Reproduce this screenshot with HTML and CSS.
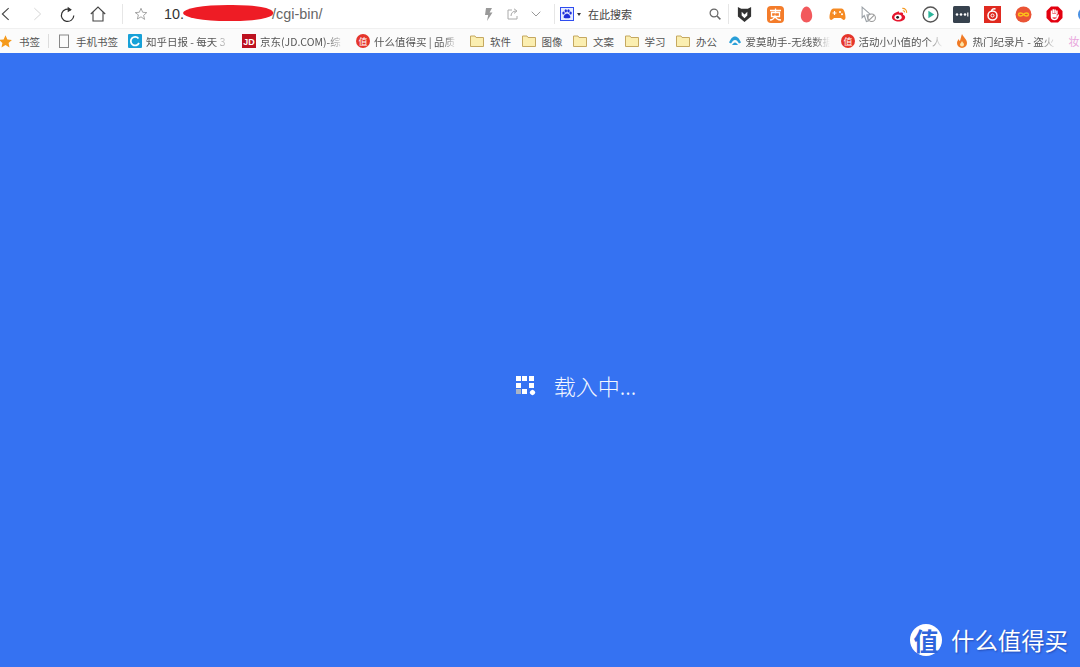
FILE: index.html
```html
<!DOCTYPE html>
<html lang="zh-CN">
<head>
<meta charset="utf-8">
<title>载入中</title>
<link rel="stylesheet" href="styles.css">
</head>
<body>
<div class="browser">
  <header class="toolbar">
    <div class="nav">
      <svg class="nb back" viewBox="0 0 10 16"><path d="M8.5 1.5 1.5 8l7 6.5" fill="none" stroke="#444" stroke-width="1.200"/></svg>
      <svg class="nb fwd" viewBox="0 0 10 16"><path d="M1.5 1.5 8.5 8l-7 6.5" fill="none" stroke="#d4d4d4" stroke-width="1.100"/></svg>
      <svg class="nb reload" viewBox="0 0 16 18"><path d="M11.600 4.200A6.600 6.600 0 1 0 14.700 10" fill="none" stroke="#333" stroke-width="1.300"/><path d="M8.200.6l4.400 3.400-4.400 2.600z" fill="#333"/></svg>
      <svg class="nb home" viewBox="0 0 16 16"><path d="M.8 8 8 1l7.200 7M3 6.200V15h10V6.200" fill="none" stroke="#444" stroke-width="1.100"/></svg>
      <i class="sep s1"></i>
      <svg class="nb fav" viewBox="0 0 16 16"><path d="m8 1.500 1.900 4.500 4.700.4-3.600 3.100 1.100 4.700L8 11.200l-4.100 2.500L5 9 1.400 6.400l4.700-.4z" fill="none" stroke="#999" stroke-width="1"/></svg>
    </div>
    <div class="url"><span>10.</span><b class="blot"></b><span class="path">/cgi-bin/</span></div>
    <div class="urlacts">
      <svg class="a1" viewBox="0 0 9 13"><path d="M2 0h6L5.600 4.500H8.500L3 13l1.200-6H1z" fill="#999"/></svg>
      <svg class="a2" viewBox="0 0 12 12"><path d="M5 2H1v9h9V8M4 8c0-3 2-5 5-5M7 .8 10 3 7 5.400" fill="none" stroke="#aaa" stroke-width="1"/></svg>
      <svg class="a3" viewBox="0 0 10 6"><path d="m.7.7 4.300 4.300L9.300.7" fill="none" stroke="#999" stroke-width="1"/></svg>
    </div>
    <i class="sep"></i>
    <div class="search">
      <svg class="paw" viewBox="0 0 14 14"><rect x=".5" y=".5" width="13" height="13" fill="#e6ecff" stroke="#2f4df0"/><g fill="#1f2fd8"><ellipse cx="3.500" cy="6" rx="1.200" ry="1.600"/><ellipse cx="5.800" cy="3.800" rx="1.200" ry="1.600"/><ellipse cx="8.500" cy="3.800" rx="1.200" ry="1.600"/><ellipse cx="10.600" cy="6" rx="1.200" ry="1.600"/><path d="M7 6.500c1.600 0 3.400 2.300 3.400 3.600 0 1.300-1.500 1.200-3.400 1.200s-3.400.1-3.400-1.200C3.600 8.800 5.400 6.500 7 6.500z"/></g></svg>
      <i class="caret"></i>
      <span class="stext">在此搜索</span>
      <svg class="glass" viewBox="0 0 12 12"><circle cx="5" cy="5" r="3.900" fill="none" stroke="#666" stroke-width="1.200"/><path d="m8 8 3.400 3.400" stroke="#666" stroke-width="1.500"/></svg>
    </div>
    <i class="sep"></i>
    <div class="exts">
      <svg viewBox="0 0 16 18"><path d="M1 1l3.500 2h7L15 1v10l-7 6-7-6z" fill="#333"/><path d="M5 6l3 3 3-3v4l-3 3-3-3z" fill="#fff"/></svg>
      <svg viewBox="0 0 17 17"><rect width="17" height="17" rx="4" fill="#f47c2a"/><path d="M3 4.500h11M8.500 2.500v5M4.500 6.500h8v4h-8zM3 14c3 0 4-1 5-4 1 3 3 4 6 4" fill="none" stroke="#fff" stroke-width="1.300"/></svg>
      <svg viewBox="0 0 13 17"><path d="M6.500.5c3 0 5.700 5 5.700 9.300 0 4-2.700 6.700-5.700 6.700S.8 13.800.8 9.800C.8 5.500 3.500.5 6.500.5z" fill="#f2595c"/></svg>
      <svg viewBox="0 0 17 13"><path d="M4.500.5h8c2.500 0 4 5 4 9 0 3-2.500 3.200-4.500.6H5C3 12.700.5 12.500.5 9.500c0-4 1.500-9 4-9z" fill="#f58a23"/><path d="M3.500 5h4M5.500 3v4" stroke="#fff" stroke-width="1.200"/><circle cx="11" cy="4" r="1" fill="#fff"/><circle cx="13" cy="6.300" r="1" fill="#fff"/></svg>
      <svg viewBox="0 0 16 16"><path d="M2 1l8 7-3.500.4L8 14l-2 .6-2-5.600L2 11z" fill="none" stroke="#9aa0a6"/><circle cx="11" cy="11" r="3.500" fill="#fff" stroke="#999"/><path d="m8.600 13.400 4.800-4.800" stroke="#999"/></svg>
      <svg viewBox="0 0 18 16"><path d="M7 5C3.500 6 1 8.500 1 11c0 2.800 3.500 4.500 7 4.500 4 0 7-2 7-4.500 0-1.800-1.500-2.400-2.300-2.700.6-1.500 0-3-2.500-2.300-1 .3-1.500.5-1.500.5C8.800 4.800 8.500 4.500 7 5z" fill="#e6162d"/><ellipse cx="7.500" cy="11" rx="3.800" ry="2.900" fill="#fff"/><circle cx="7" cy="11" r="1.500" fill="#222"/><path d="M12 1.500c2.800-.3 5 2 4.500 4.800M12.500 4c1.300-.2 2 .8 1.800 1.800" fill="none" stroke="#f59a23" stroke-width="1.200"/></svg>
      <svg viewBox="0 0 16 16"><circle cx="8" cy="8" r="7" fill="#fff" stroke="#555" stroke-width="1.300"/><path d="M6 4.500 11.500 8 6 11.500z" fill="#2bb59b"/></svg>
      <svg viewBox="0 0 17 17"><rect width="17" height="17" rx="1.500" fill="#37424e"/><g fill="#fff"><circle cx="4" cy="8.500" r="1.300"/><circle cx="8" cy="8.500" r="1.300"/><circle cx="12" cy="8.500" r="1.300"/></g><rect x="14.200" y="6.500" width="1.200" height="4" fill="#fff"/></svg>
      <svg viewBox="0 0 17 17"><rect width="17" height="17" fill="#e02a20"/><circle cx="8.500" cy="9.500" r="4.500" fill="none" stroke="#fff" stroke-width="1.500"/><circle cx="8.500" cy="9.500" r="1.500" fill="none" stroke="#fff"/><path d="M7.500 6c0-3 2-3.500 4-3" fill="none" stroke="#fff" stroke-width="1.500"/></svg>
      <svg viewBox="0 0 17 17"><circle cx="8.500" cy="8.500" r="8" fill="#ea5435"/><path d="M8.500 8.500c-1.500-2-5-2-5 0s3.500 2 5 0c1.500-2 5-2 5 0s-3.500 2-5 0z" fill="none" stroke="#fcc419" stroke-width="1.400"/></svg>
      <svg viewBox="0 0 17 17"><path d="M5 .5h7L16.500 5v7L12 16.500H5L.5 12V5z" fill="#e3000f"/><path d="M5.500 8V4.500M7.300 7V3.300M9.100 7V3.500M10.900 8V4.500M5.500 7.500v3c0 1.800 1 3 3 3s3-1 3.300-3l.6-2" fill="none" stroke="#fff" stroke-width="1.500"/><path d="M5.800 7.500h5v4h-5z" fill="#fff"/></svg>
      <svg viewBox="0 0 16 17"><circle cx="8" cy="8.500" r="7.500" fill="#4a90e2"/></svg>
    </div>
  </header>
  <nav class="bookmarks">
    <div class="bm b-top"><svg class="bi star" viewBox="0 0 13 13"><path d="m6.500.3 1.900 4.100 4.500.5-3.300 3 .9 4.500-4-2.300-4 2.300.9-4.500-3.300-3 4.500-.5z" fill="#f59a1b"/></svg><span>书签</span></div>
    <i class="bsep"></i>
    <div class="bm b-mobile"><svg class="bi" viewBox="0 0 14 14"><rect x="2.500" y="1" width="9" height="12.500" fill="none" stroke="#888"/></svg><span>手机书签</span></div>
    <div class="bm b-long"><svg class="bi" viewBox="0 0 14 14"><rect width="14" height="14" rx="1" fill="#17a1d8"/><path d="M10.500 4.500A4.300 4.300 0 1 0 11 9" fill="none" stroke="#fff" stroke-width="1.800"/></svg><span class="fade">知乎日报 - 每天 3</span></div>
    <div class="bm b-long"><svg class="bi" viewBox="0 0 14 14"><rect width="14" height="14" fill="#bd1220"/><text class="jd" x="7" y="10.500" text-anchor="middle">JD</text></svg><span class="fade">京东(JD.COM)-综</span></div>
    <div class="bm b-long"><svg class="bi" viewBox="0 0 14 14"><circle cx="7" cy="7" r="7" fill="#e5352b"/><text class="zhi" x="7" y="10.500" text-anchor="middle">值</text></svg><span class="fade">什么值得买 | 品质</span></div>
    <div class="bm b-dir"><svg class="bi" viewBox="0 0 14 12"><path d="M.5 1h4.500l1 1.500h7.500v9H.5z" fill="#fbeeb0" stroke="#c5a860"/></svg><span>软件</span></div>
    <div class="bm b-dir"><svg class="bi" viewBox="0 0 14 12"><path d="M.5 1h4.500l1 1.500h7.500v9H.5z" fill="#fbeeb0" stroke="#c5a860"/></svg><span>图像</span></div>
    <div class="bm b-dir"><svg class="bi" viewBox="0 0 14 12"><path d="M.5 1h4.500l1 1.500h7.500v9H.5z" fill="#fbeeb0" stroke="#c5a860"/></svg><span>文案</span></div>
    <div class="bm b-dir"><svg class="bi" viewBox="0 0 14 12"><path d="M.5 1h4.500l1 1.500h7.500v9H.5z" fill="#fbeeb0" stroke="#c5a860"/></svg><span>学习</span></div>
    <div class="bm b-dir"><svg class="bi" viewBox="0 0 14 12"><path d="M.5 1h4.500l1 1.500h7.500v9H.5z" fill="#fbeeb0" stroke="#c5a860"/></svg><span>办公</span></div>
    <div class="bm b-long b-tight"><svg class="bi" viewBox="0 0 14 14"><path d="M1 8.500C3 4 5 2.500 7 2.500s4 1.500 6 6l-2 1C9.500 7 8.500 6 7 6S4.500 7 3 9.500z" fill="#2a9fd8"/><path d="M4 11c1-1.500 2-2.500 3-2.500s2 1 3 2.500z" fill="#2a9fd8"/></svg><span class="fade">爱莫助手-无线数据</span></div>
    <div class="bm b-long"><svg class="bi" viewBox="0 0 14 14"><circle cx="7" cy="7" r="7" fill="#e5352b"/><text class="zhi" x="7" y="10.500" text-anchor="middle">值</text></svg><span class="fade">活动小小值的个人</span></div>
    <div class="bm b-long"><svg class="bi" viewBox="0 0 14 14"><path d="M7 0c1 3 5 5 5 9a5 5 0 0 1-10 0c0-2 1-3 2-4 0 1 .5 2 1 2 .5-2 1-4 2-7z" fill="#f07a25"/><path d="M7 7c.5 1.500 2 2 2 3.500a2 2 0 0 1-4 0C5 9.500 6.500 8.500 7 7z" fill="#fde3a7"/></svg><span class="fade">热门纪录片 - 盗火</span></div>
    <span class="last">妆</span>
  </nav>
  <main class="stage">
    <div class="loader">
      <div class="dots">
        <i></i><i></i><i></i>
        <i></i><i class="off"></i><i></i>
        <i class="grey"></i><i></i><i class="tail"></i>
      </div>
      <span class="ltext">载入中...</span>
    </div>
    <div class="mark"><span class="seal">值</span><span class="mtext">什么值得买</span></div>
  </main>
</div>
</body>
</html>
```
FILE: styles.css
```css
* { box-sizing: border-box; }
html, body { margin: 0; height: 100%; overflow: hidden; }
body { font-family: "Liberation Sans", "Noto Sans CJK SC", sans-serif; background: #3572f2; }
.browser { display: flex; flex-direction: column; height: 667px; width: 1080px; overflow: hidden; }

.toolbar { display: flex; align-items: center; flex: none; height: 28px; background: #fff; }
.nav { display: flex; align-items: center; width: 164px; flex: none; }
.nb { display: block; flex: none; }
.back { width: 9px; height: 16px; margin-left: 1px; }
.fwd { width: 9px; height: 16px; margin-left: 23px; }
.reload { width: 15px; height: 17px; margin-left: 18px; }
.home { width: 16px; height: 16px; margin-left: 15px; }
.sep { display: block; flex: none; width: 1px; height: 20px; background: #e6e6e6; }
.s1 { margin-left: 16px; }
.fav { width: 14px; height: 14px; margin-left: 11px; }

.url { position: relative; display: flex; flex: none; width: 320px; font-size: 14.400px; color: #333; }
.blot { position: absolute; left: 19px; top: -1px; width: 90px; height: 16px; border-radius: 50% 45% 45% 50%; background: #ee1c25; }
.path { margin-left: 88px; color: #666; }

.urlacts { display: flex; align-items: center; flex: none; width: 70px; }
.a1 { width: 9px; height: 13px; }
.a2 { width: 12px; height: 12px; margin-left: 14px; }
.a3 { width: 10px; height: 6px; margin-left: 12px; }

.search { display: flex; align-items: center; flex: none; width: 173px; padding-left: 5px; font-size: 11px; color: #444; font-family: "Noto Sans CJK SC", sans-serif; }
.paw { width: 14px; height: 14px; flex: none; }
.caret { width: 0; height: 0; margin-left: 3px; border: 2.500px solid transparent; border-top: 3px solid #333; border-bottom: 0; }
.stext { margin-left: 7px; width: 121px; flex: none; }
.glass { width: 12px; height: 12px; flex: none; }

.exts { display: flex; align-items: center; flex: none; gap: 14px; margin-left: 7px; width: 352px; }
.exts svg { width: 17px; height: 17px; flex: none; }

.bookmarks { display: flex; align-items: center; flex: none; height: 25px; background: #fbfbfb; font-family: "Noto Sans CJK SC", sans-serif; font-size: 10.500px; color: #555; white-space: nowrap; overflow: hidden; border-top: 1px solid #f0f0f0; }
.bm { display: flex; align-items: center; flex: none; gap: 4px; }
.bi { width: 14px; height: 14px; flex: none; }
.star { width: 13px; height: 13px; margin-left: -1px; margin-right: 3px; }
.b-top { width: 48px; }
.bsep { flex: none; width: 1px; height: 14px; background: #ddd; margin-right: 8px; }
.b-mobile { width: 71px; gap: 5px; }
.b-long { width: 114px; }
.b-tight { width: 113px; }
.b-dir { width: 51.500px; gap: 6px; }
.b-dir .bi { height: 12px; }
.fade { display: block; width: 84px; -webkit-mask-image: linear-gradient(90deg, #000 80%, transparent); mask-image: linear-gradient(90deg, #000 80%, transparent); }
.last { flex: none; color: #e9a6dd; font-size: 11px; }
.jd { font: bold 9px "Liberation Sans", sans-serif; fill: #fff; }
.zhi { font: 9px "Noto Sans CJK SC", sans-serif; fill: #fff; }

.stage { position: relative; flex: 1; display: flex; align-items: center; justify-content: center; padding: 50px 0 0 72px; background: #3572f2; color: #fff; font-family: "Noto Sans CJK SC", sans-serif; }
.loader { display: flex; align-items: center; gap: 20px; }
.dots { display: grid; grid-template-columns: repeat(3, 5px); grid-auto-rows: 5px; gap: 1.500px; width: 18px; }
.dots i { background: #fff; }
.dots .off { background: transparent; }
.dots .grey { background: #a9b4c6; }
.dots .tail { border-radius: 2px; transform: translate(1px, 1px) rotate(45deg); }
.ltext { font-size: 22px; font-weight: 300; line-height: 28px; color: #f3f6ff; }

.mark { position: absolute; left: 910px; top: 571px; display: flex; align-items: center; gap: 9px; }
.seal { display: flex; align-items: center; justify-content: center; width: 32px; height: 32px; border-radius: 50%; background: #fff; color: #2f66dc; font-size: 25px; font-weight: 700; line-height: 1; }
.mtext { font-size: 23.400px; line-height: 32px; color: #fff; text-shadow: 1px 1px 2px rgba(0, 0, 60, .35); }
```
